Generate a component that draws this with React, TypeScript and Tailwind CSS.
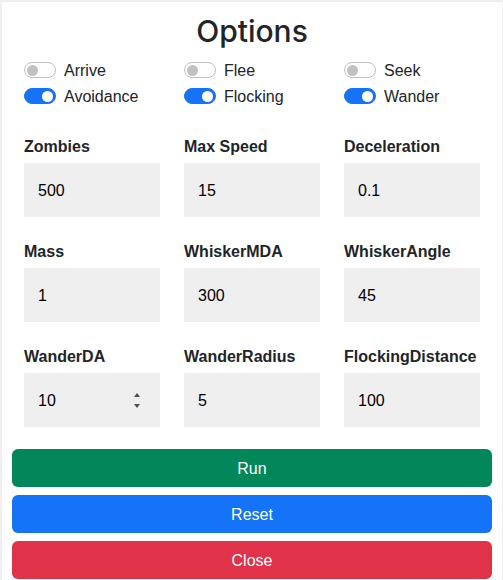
import { useState } from "react";

type Field = { label: string; value: string; spinner?: boolean };

const fields: Field[] = [
  { label: "Zombies", value: "500" },
  { label: "Max Speed", value: "15" },
  { label: "Deceleration", value: "0.1" },
  { label: "Mass", value: "1" },
  { label: "WhiskerMDA", value: "300" },
  { label: "WhiskerAngle", value: "45" },
  { label: "WanderDA", value: "10", spinner: true },
  { label: "WanderRadius", value: "5" },
  { label: "FlockingDistance", value: "100" },
];

const behaviours = [
  { name: "Arrive", on: false },
  { name: "Flee", on: false },
  { name: "Seek", on: false },
  { name: "Avoidance", on: true },
  { name: "Flocking", on: true },
  { name: "Wander", on: true },
];

function Switch({ checked, onChange }: { checked: boolean; onChange: () => void }) {
  return (
    <button
      role="switch"
      aria-checked={checked}
      onClick={onChange}
      className={
        "mt-[4px] flex h-[16px] w-[32px] shrink-0 items-center rounded-full border px-[2px] " +
        (checked
          ? "justify-end border-[#1473f6] bg-[#1473f6]"
          : "justify-start border-[#c2c2c2] bg-white")
      }
    >
      <span
        className={
          "block h-[11px] w-[11px] rounded-full " +
          (checked ? "bg-white" : "bg-[#c2c2c2]")
        }
      />
    </button>
  );
}

export default function App() {
  const [toggles, setToggles] = useState(behaviours.map((b) => b.on));

  return (
    <div className="min-h-screen bg-[#efefef] pl-[2px] pr-[1px] pt-[2px] font-['Liberation_Sans',Arial,sans-serif] text-[#212529]">
      <div className="bg-white px-[10px] pb-[10px] pt-[11px]">
        <h1 className="mb-[9px] text-center font-['Inter',sans-serif] text-[30px] leading-[36px] font-medium">
          Options
        </h1>

        <div className="grid grid-cols-3">
          {behaviours.map((b, i) => (
            <label
              key={b.name}
              className="mb-[2px] flex h-[24px] items-start gap-[8px] px-[12px] text-[16px] leading-[25px]"
            >
              <Switch
                checked={toggles[i]}
                onChange={() =>
                  setToggles(toggles.map((t, j) => (j === i ? !t : t)))
                }
              />
              <span>{b.name}</span>
            </label>
          ))}
        </div>

        <div className="mt-[24px] grid grid-cols-3 gap-y-[22px]">
          {fields.map((f) => (
            <div key={f.label} className="px-[12px]">
              <div className="mb-[4px] pt-[1px] text-[16px] font-bold leading-[24px] whitespace-nowrap">
                {f.label}
              </div>
              <div className="flex h-[54px] items-center bg-[#efefef] pl-[14px] pr-[20px] pt-[2px]">
                <input
                  readOnly
                  value={f.value}
                  className="min-w-0 flex-1 bg-transparent text-[16px] text-black outline-none"
                />
                {f.spinner && (
                  <svg width="6" height="15" viewBox="0 0 6 15" className="mb-[2px] shrink-0">
                    <polygon points="0,4 3,0 6,4" fill="#4d4d4d" />
                    <polygon points="0,11 6,11 3,15" fill="#4d4d4d" />
                  </svg>
                )}
              </div>
            </div>
          ))}
        </div>

        <div className="mt-[22px] flex flex-col gap-[8px]">
          <button className="h-[38px] rounded-[6px] bg-[#01875a] pt-[1px] text-[16px] text-white">
            Run
          </button>
          <button className="h-[38px] rounded-[6px] bg-[#1473f6] pt-[1px] text-[16px] text-white">
            Reset
          </button>
          <button className="h-[38px] rounded-[6px] bg-[#e0334a] pt-[1px] text-[16px] text-white">
            Close
          </button>
        </div>
      </div>
    </div>
  );
}
